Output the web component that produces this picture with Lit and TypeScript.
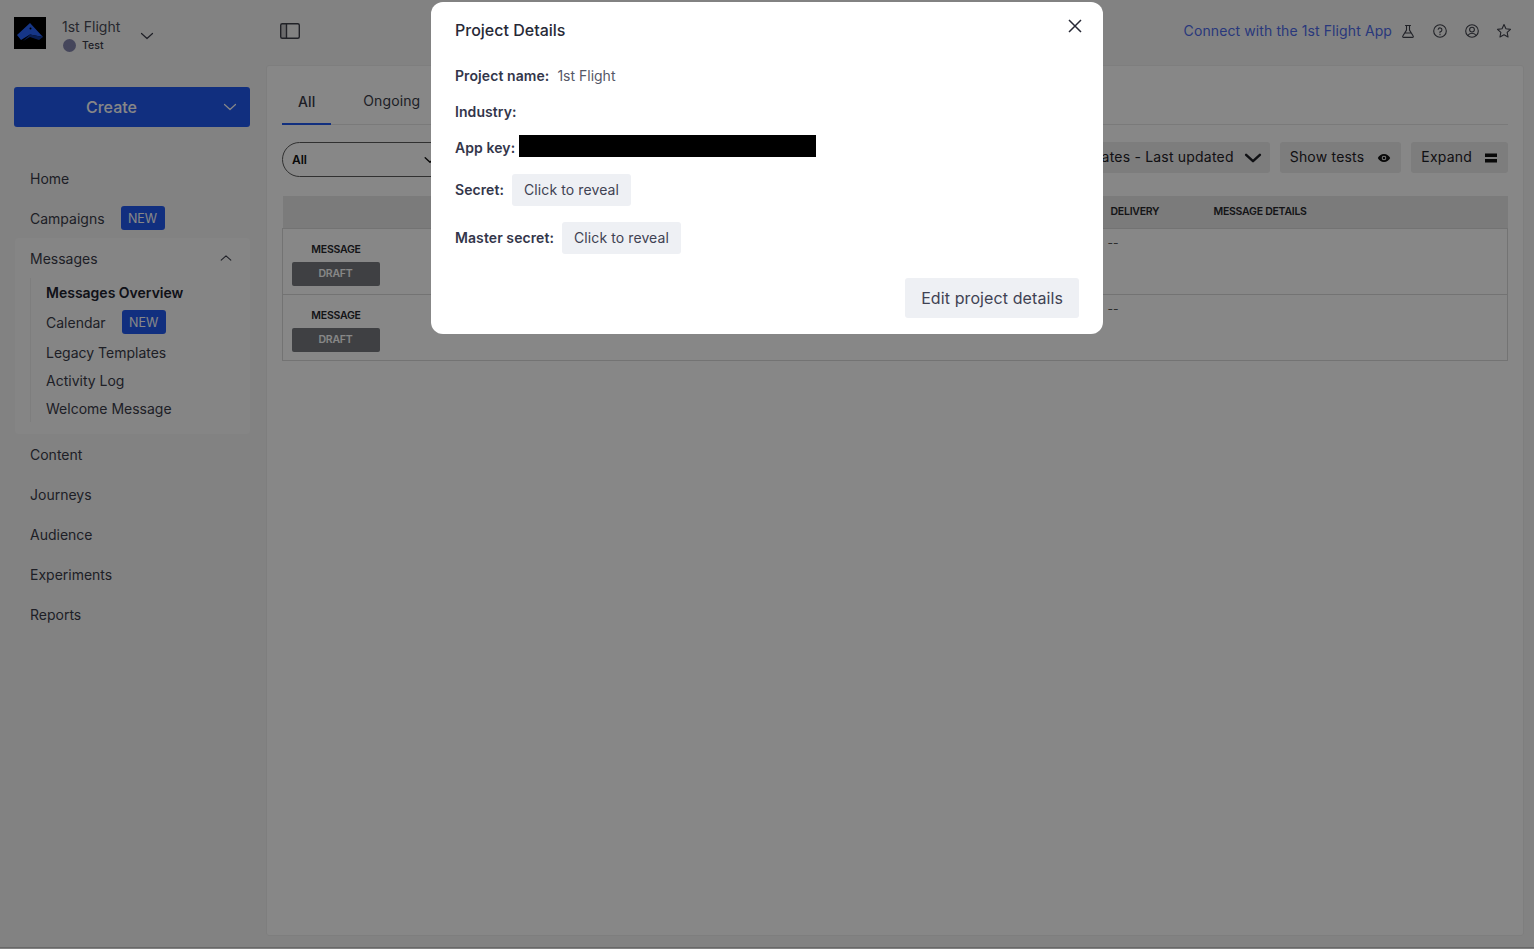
import { LitElement, html, css, svg } from "lit";
import { customElement } from "lit/decorators.js";

const chevron = (size: number, w = 1.2) => html`<svg width=${size} height=${size} viewBox="0 0 16 16" fill="none" stroke="currentColor" stroke-width=${w} stroke-linecap="round" stroke-linejoin="round"><path d="M2.5 5.5 8 10.5l5.5-5"/></svg>`;

@customElement("app-root")
export class AppRoot extends LitElement {
  static styles = css`
    :host { display: block; font-family: Inter, "Noto Sans", sans-serif; color: #3a3c49; }
    * { box-sizing: border-box; }
    .shell { height: 949px; background: #f6f6f6; display: flex; flex-direction: column; overflow: hidden; padding-bottom: 1px; }
    .frame { flex: 1; display: flex; flex-direction: column; border-bottom: 1px solid #c4c4c4; min-height: 0; }

    header { height: 64px; display: flex; align-items: center; flex: none; }
    .brand { width: 266px; display: flex; align-items: center; padding: 2px 0 0 14px; flex: none; }
    .logo { width: 32px; height: 32px; background: #000; flex: none; display: block; }
    .brand-text { margin-left: 16px; width: 77px; display: flex; flex-direction: column; padding-top: 4px; }
    .brand-name { font-size: 14px; line-height: 20px; letter-spacing: 0.02px; color: #4a4c58; }
    .env { display: flex; align-items: center; gap: 6px; font-size: 10.5px; font-weight: 500; line-height: 17px; letter-spacing: 0.05px; color: #3a3c49; }
    .dot { width: 13px; height: 13px; border-radius: 50%; background: #8385ac; margin-left: 1px; }
    .brand-chev { color: #3a3c49; display: flex; margin-top: 5px; }
    .toggle { display: flex; margin-left: 13px; margin-top: -2px; color: #3f414b; }
    .top-right { margin-left: auto; display: flex; align-items: center; padding-right: 22px; margin-top: -2px; }
    .connect { font-size: 14px; letter-spacing: 0.1px; color: #4e6bea; margin-right: 8px; padding-bottom: 2px; }
    .ticons { display: flex; gap: 16px; color: #3f414b; }
    .ticons svg { display: block; }

    .body { flex: 1; display: flex; min-height: 0; }
    aside { width: 266px; flex: none; padding: 23px 16px 0 14px; }
    .create { height: 40px; background: #2159f0; color: #fff; border-radius: 3px; display: flex; align-items: center; font-size: 16px; font-weight: 500; padding: 0 12px 0 72px; justify-content: space-between; }
    nav { margin-top: 31px; font-size: 14px; color: #3a3c49; }
    .item { height: 40px; display: flex; align-items: center; padding-left: 16px; gap: 16px; }
    .badge { background: #2159f0; color: #fff; font-size: 12.5px; height: 24px; width: 44px; border-radius: 3px; display: flex; align-items: center; justify-content: center; }
    .group { background: #fbfbfb; margin-left: 1px; padding-bottom: 12px; border-radius: 4px; }
    .group .item { padding-left: 15px; justify-content: space-between; padding-right: 17px; }
    .group-chev { display: flex; transform: rotate(180deg); }
    .sub { margin-left: 15px; border-left: 1px solid #eeeeee; padding-left: 15px; }
    .subitem { height: 28px; display: flex; align-items: center; gap: 16px; }
    .subitem.tall { height: 32px; }
    .subitem.active { font-weight: 600; color: #20222f; }

    main { flex: 1; margin: 1px 10px 11px 0; background: #fff; border: 1px solid #eeeeee; border-radius: 3px; padding: 0 15px; min-width: 0; }
    .tabs { height: 59px; display: flex; align-items: stretch; border-bottom: 1px solid #e6e6e6; font-size: 14px; letter-spacing: 0.1px; }
    .tab { display: flex; align-items: center; padding: 13px 16px 2px; color: #3a3c49; }
    .tab.on { border-bottom: 2px solid #2159f0; margin-bottom: -1px; font-weight: 500; padding-bottom: 0; }
    .tab + .tab { margin-left: 16px; padding-left: 16px; }
    .tools { height: 71px; display: flex; align-items: flex-start; justify-content: space-between; padding-top: 17px; }
    .pill { width: 170px; height: 35px; border: 1px solid #5c5c5c; border-radius: 18px; display: flex; align-items: center; justify-content: space-between; padding: 0 14px 0 9px; font-size: 12px; font-weight: 600; color: #111; }
    .tool-right { display: flex; gap: 10px; }
    .tbtn { height: 31px; background: #ececec; border-radius: 3px; display: flex; align-items: center; padding: 0 10px; gap: 12px; font-size: 14px; letter-spacing: 0.2px; color: #1f2026; }
    .tbtn span { padding-bottom: 2px; }
    .tbtn.sort { padding: 0 7px 0 14px; gap: 9px; }
    .tbtn.show { gap: 13px; }
    .tbtn svg { display: block; }
    table { width: 100%; border-collapse: collapse; table-layout: fixed; font-size: 10.5px; }
    th { background: #e8e8e8; height: 32px; text-align: left; font-weight: 600; color: #26272c; padding: 0; letter-spacing: -0.25px; }
    th.del { padding-left: 0; }
    td { height: 66px; border: 1px solid #d9d9d9; vertical-align: top; padding: 0; color: #555; }
    td.mid { border-left: 0; border-right: 0; }
    td.first { border-right: 0; }
    td.rest { border-left: 0; }
    .msg { width: 108px; margin-left: -1px; display: flex; flex-direction: column; align-items: center; padding: 14px 0 0 0; gap: 6px; font-weight: 600; font-size: 10.5px; color: #26272c; letter-spacing: -0.25px; }
    .draft { width: 88px; margin-left: -1px; height: 24px; background: #777a7f; color: #fff; border-radius: 2px; display: flex; align-items: center; justify-content: center; font-weight: 600; font-size: 10.5px; }
    .dash { padding: 6px 0 0 0; margin-left: -3px; font-size: 12px; }

    .overlay { position: fixed; inset: 0; background: rgba(0,0,0,.47); display: flex; justify-content: center; align-items: flex-start; }
    .modal { position: relative; width: 672px; margin-top: 2px; background: #fff; border-radius: 12px; padding: 16px 24px; display: flex; flex-direction: column; }
    .title { font-size: 16px; line-height: 24px; font-weight: 500; color: #272936; margin-bottom: 22px; }
    .close { position: absolute; top: 16px; right: 20px; display: flex; color: #272936; }
    .row { display: flex; align-items: center; font-size: 14px; height: 24px; margin-bottom: 12px; color: #555867; }
    .row b { font-weight: 600; color: #33364a; letter-spacing: .08px; padding-bottom: 2px; }
    .row .v { margin-left: 8px; padding-bottom: 2px; }
    .mask { width: 297px; height: 22px; background: #000; margin-left: 4px; margin-top: -4px; }
    .row.sec { height: 32px; margin-bottom: 16px; gap: 8px; }
    .row.sec.first2 { margin-top: 2px; }
    .reveal { background: #eef0f4; border-radius: 3px; height: 32px; padding: 0 12px 2px; display: flex; align-items: center; color: #3f4253; letter-spacing: .1px; }
    .foot { display: flex; justify-content: flex-end; margin-top: 8px; }
    .edit { background: #eef0f4; border-radius: 3px; height: 40px; padding: 0 16px; display: flex; align-items: center; font-size: 16px; letter-spacing: .1px; color: #3f4253; }
  `;

  private row() {
    return html`<tr>
      <td class="first" colspan="1"><div class="msg">MESSAGE<div class="draft">DRAFT</div></div></td>
      <td class="mid"><div class="dash">--</div></td>
      <td class="rest"></td>
    </tr>`;
  }

  render() {
    return html`<div class="shell"><div class="frame">
      <header>
        <div class="brand">
          <svg class="logo" viewBox="0 0 32 32">
            <path fill="#2a66ff" d="M16 6 3 18l4 5 9-5.5 13 2.5z"/>
            <path fill="#123a9e" d="M9 24l7-4 9 3 4-3-13-2.5z"/>
            <circle cx="16.5" cy="11.5" r="1" fill="#000"/>
          </svg>
          <div class="brand-text">
            <div class="brand-name">1st Flight</div>
            <div class="env"><span class="dot"></span>Test</div>
          </div>
          <span class="brand-chev">${chevron(16)}</span>
        </div>
        <span class="toggle">
          <svg width="22" height="18" viewBox="0 0 22 18" fill="none" stroke="currentColor" stroke-width="1.4"><rect x="1.7" y="1.7" width="18.6" height="14.6" rx="1.5"/><rect x="2" y="2" width="5.5" height="14" fill="currentColor" fill-opacity=".25" stroke="none"/><path d="M7.5 1.7v14.6"/></svg>
        </span>
        <div class="top-right">
          <span class="connect">Connect with the 1st Flight App</span>
          <div class="ticons">
            ${this.ticon(svg`<path d="M5.5 2.5h5M6.5 2.5v4.6L2.8 13a.9.9 0 0 0 .8 1.4h8.8a.9.9 0 0 0 .8-1.4L9.5 7.1V2.5M4.8 10h6.4"/>`)}
            ${this.ticon(svg`<circle cx="8" cy="8" r="6.3"/><path d="M6.2 6.3A1.9 1.9 0 1 1 8 8.7v1"/><path d="M8 11.4v.3"/>`)}
            ${this.ticon(svg`<circle cx="8" cy="8" r="6.3"/><circle cx="8" cy="6.6" r="2.4"/><path d="M3.9 12.6c.8-1.6 2.3-2.4 4.1-2.4s3.3.8 4.1 2.4"/>`)}
            ${this.ticon(svg`<path d="M8 1.6l1.95 4.2 4.55.55-3.35 3.1.9 4.55L8 11.75 3.95 14l.9-4.55L1.5 6.35l4.55-.55z"/>`)}
          </div>
        </div>
      </header>
      <div class="body">
        <aside>
          <div class="create"><span>Create</span>${chevron(16)}</div>
          <nav>
            <div class="item">Home</div>
            <div class="item">Campaigns <span class="badge">NEW</span></div>
            <div class="group">
              <div class="item">Messages <span class="group-chev">${chevron(14)}</span></div>
              <div class="sub">
                <div class="subitem active">Messages Overview</div>
                <div class="subitem tall">Calendar <span class="badge">NEW</span></div>
                <div class="subitem">Legacy Templates</div>
                <div class="subitem">Activity Log</div>
                <div class="subitem">Welcome Message</div>
              </div>
            </div>
            <div class="item">Content</div>
            <div class="item">Journeys</div>
            <div class="item">Audience</div>
            <div class="item">Experiments</div>
            <div class="item">Reports</div>
          </nav>
        </aside>
        <main>
          <div class="tabs">
            <div class="tab on">All</div>
            <div class="tab">Ongoing</div>
          </div>
          <div class="tools">
            <div class="pill">All ${chevron(14, 1.6)}</div>
            <div class="tool-right">
              <div class="tbtn sort"><span>Dates - Last updated</span> ${chevron(20, 2)}</div>
              <div class="tbtn show"><span>Show tests</span>
                <svg width="14" height="14" viewBox="0 0 14 14"><path fill="#111" fill-rule="evenodd" d="M7 3C4.2 3 1.8 4.7.8 7c1 2.3 3.4 4 6.2 4s5.2-1.7 6.2-4c-1-2.3-3.4-4-6.2-4zm0 6.3A2.3 2.3 0 1 1 7 4.7a2.3 2.3 0 0 1 0 4.6z"/><circle cx="7" cy="7" r="1.3" fill="#111"/></svg>
              </div>
              <div class="tbtn"><span>Expand</span>
                <svg width="14" height="14" viewBox="0 0 14 14"><path fill="#111" d="M1 2.5h12v3.6H1zM1 8h12v3.6H1z"/></svg>
              </div>
            </div>
          </div>
          <table>
            <colgroup><col style="width:828px"/><col style="width:103px"/><col/></colgroup>
            <thead><tr><th></th><th class="del">DELIVERY</th><th>MESSAGE DETAILS</th></tr></thead>
            <tbody>${this.row()}${this.row()}</tbody>
          </table>
        </main>
      </div>
    </div></div>
    <div class="overlay">
      <div class="modal">
        <div class="title">Project Details</div>
        <span class="close"><svg width="16" height="16" viewBox="0 0 16 16" fill="none" stroke="currentColor" stroke-width="1.5"><path d="M2 2l12 12M14 2 2 14"/></svg></span>
        <div class="row"><b>Project name:</b><span class="v">1st Flight</span></div>
        <div class="row"><b>Industry:</b></div>
        <div class="row"><b>App key:</b><span class="mask"></span></div>
        <div class="row sec first2"><b>Secret:</b><span class="reveal">Click to reveal</span></div>
        <div class="row sec"><b>Master secret:</b><span class="reveal">Click to reveal</span></div>
        <div class="foot"><span class="edit">Edit project details</span></div>
      </div>
    </div>`;
  }

  private ticon(p: unknown) {
    return html`<svg width="16" height="16" viewBox="0 0 16 16" fill="none" stroke="currentColor" stroke-width="1.1" stroke-linecap="round" stroke-linejoin="round">${p}</svg>`;
  }
}
